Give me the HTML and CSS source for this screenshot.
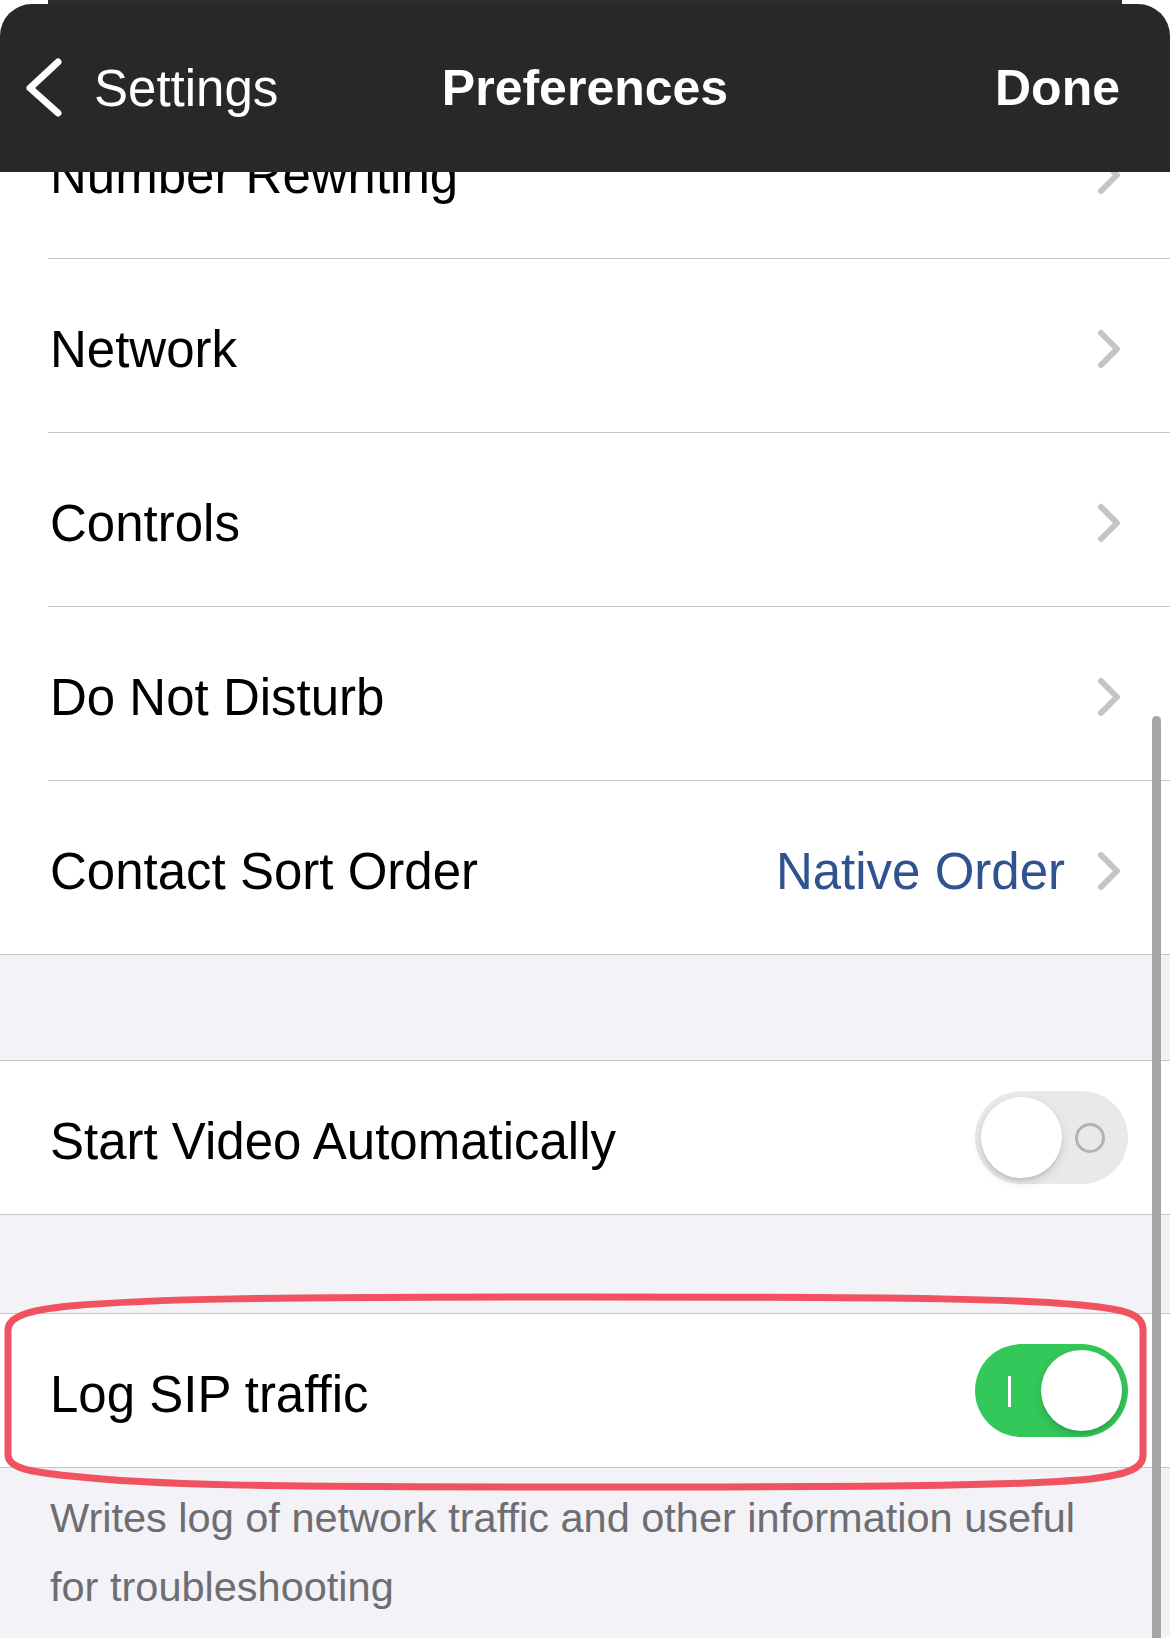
FILE: index.html
```html
<!DOCTYPE html>
<html lang="en">
<head>
<meta charset="utf-8">
<title>Preferences</title>
<link rel="stylesheet" href="styles.css">
</head>
<body>
<div class="screen">
  <div class="backcard"></div>
  <div class="sheet">
    <header class="nav">
      <div class="nav-left">
        <svg class="back-chev" width="40" height="60" viewBox="0 0 40 60"><path d="M33 4 L5 30 L33 55" fill="none" stroke="#fff" stroke-width="7" stroke-linecap="round" stroke-linejoin="round"/></svg>
        <span>Settings</span>
      </div>
      <div class="nav-title">Preferences</div>
      <div class="nav-right">Done</div>
    </header>

    <div class="content">
      <div class="group group-first">
        <div class="row">
          <span class="label">Number Rewriting</span>
          <svg class="chev" width="24" height="40" viewBox="0 0 24 40"><path d="M4 4 L20 20 L4 36" fill="none" stroke="#c4c4c7" stroke-width="6" stroke-linecap="round" stroke-linejoin="round"/></svg>
        </div>
        <div class="row">
          <span class="label">Network</span>
          <svg class="chev" width="24" height="40" viewBox="0 0 24 40"><path d="M4 4 L20 20 L4 36" fill="none" stroke="#c4c4c7" stroke-width="6" stroke-linecap="round" stroke-linejoin="round"/></svg>
        </div>
        <div class="row">
          <span class="label">Controls</span>
          <svg class="chev" width="24" height="40" viewBox="0 0 24 40"><path d="M4 4 L20 20 L4 36" fill="none" stroke="#c4c4c7" stroke-width="6" stroke-linecap="round" stroke-linejoin="round"/></svg>
        </div>
        <div class="row">
          <span class="label">Do Not Disturb</span>
          <svg class="chev" width="24" height="40" viewBox="0 0 24 40"><path d="M4 4 L20 20 L4 36" fill="none" stroke="#c4c4c7" stroke-width="6" stroke-linecap="round" stroke-linejoin="round"/></svg>
        </div>
        <div class="row row-last">
          <span class="label">Contact Sort Order</span>
          <span class="label value">Native Order</span>
          <svg class="chev" width="24" height="40" viewBox="0 0 24 40"><path d="M4 4 L20 20 L4 36" fill="none" stroke="#c4c4c7" stroke-width="6" stroke-linecap="round" stroke-linejoin="round"/></svg>
        </div>
      </div>

      <div class="group group-switch">
        <div class="row row-switch">
          <span class="label">Start Video Automatically</span>
          <div class="toggle toggle-off">
            <span class="toggle-o"></span>
            <span class="knob"></span>
          </div>
        </div>
      </div>

      <div class="group group-switch group-sip">
        <div class="row row-switch">
          <span class="label">Log SIP traffic</span>
          <div class="toggle toggle-on">
            <span class="toggle-i"></span>
            <span class="knob"></span>
          </div>
        </div>
      </div>

      <p class="footer">Writes log of network traffic and other information useful for troubleshooting</p>
    </div>
  </div>

  <div class="scrollbar"></div>

  <svg class="annotation" width="1170" height="1638" viewBox="0 0 1170 1638">
    <path d="M8 1330 C8 1316 30 1310 70 1306 C150 1299 250 1297 585 1297 C920 1297 1030 1299 1090 1306 C1130 1310 1143 1316 1143 1330 L1143 1455 C1143 1468 1130 1474 1090 1479 C1030 1485 920 1487 585 1487 C250 1487 150 1485 70 1476 C30 1472 8 1468 8 1455 Z" fill="none" stroke="#f0535f" stroke-width="7"/>
  </svg>
</div>
</body>
</html>
```

FILE: styles.css
```css
* { box-sizing: border-box; }

html, body {
  margin: 0;
  padding: 0;
  background: #ffffff;
}

.screen {
  position: relative;
  width: 1170px;
  height: 1638px;
  overflow: hidden;
  background: #ffffff;
  font-family: "Liberation Sans", Arial, sans-serif;
}

.backcard {
  position: absolute;
  top: 0;
  left: 48px;
  right: 48px;
  height: 30px;
  background: #2e2e2e;
}

.sheet {
  position: relative;
  margin-top: 4px;
  height: 1634px;
  border-radius: 32px 32px 0 0;
  overflow: hidden;
  background: #f2f2f7;
}

.nav {
  position: absolute;
  top: 0;
  left: 0;
  right: 0;
  height: 168px;
  z-index: 2;
  background: #282828;
  color: #ffffff;
  display: grid;
  grid-template-columns: 1fr auto 1fr;
  align-items: center;
  padding: 0 25px;
  font-size: 51px;
}

.nav-left {
  display: flex;
  align-items: center;
  gap: 29px;
}

.back-chev { display: block; }

.nav-title {
  font-weight: 700;
  font-size: 50px;
}

.nav-right {
  justify-self: end;
  padding-right: 25px;
  font-weight: 700;
  font-size: 50px;
}

.content {
  padding-top: 81px;
}

.group {
  background: #ffffff;
  border-bottom: 1px solid #c6c6c8;
}

.group-switch {
  border-top: 1px solid #c6c6c8;
  margin-top: 105px;
}

.group-sip {
  margin-top: 98px;
}

.row {
  display: flex;
  align-items: center;
  height: 174px;
  margin-left: 48px;
  padding: 0 49px 0 2px;
  border-bottom: 1px solid #c6c6c8;
}

.row-last {
  border-bottom: none;
  height: 173px;
}

.row-switch {
  height: 153px;
  border-bottom: none;
  padding-right: 42px;
}

.label {
  font-size: 51px;
  color: #000000;
  padding-top: 10px;
  line-height: 1.15;
  white-space: nowrap;
}

.value {
  margin-left: auto;
  margin-right: 32px;
  color: #30528f;
}

.chev {
  display: block;
  margin-left: auto;
  margin-top: 6px;
}

.value + .chev { margin-left: 0; }

.toggle {
  position: relative;
  margin-left: auto;
  width: 153px;
  height: 93px;
  border-radius: 47px;
  flex: none;
}

.toggle-off { background: #e9e9ea; }
.toggle-on { background: #34c759; }

.knob {
  position: absolute;
  top: 6px;
  left: 6px;
  width: 81px;
  height: 81px;
  border-radius: 50%;
  background: #ffffff;
  box-shadow: 0 4px 10px rgba(0, 0, 0, 0.14), 0 3px 1px rgba(0, 0, 0, 0.05);
}

.toggle-on .knob { left: 66px; }

.toggle-o {
  position: absolute;
  left: 100px;
  top: 32px;
  width: 30px;
  height: 30px;
  border: 3px solid #b3b3b3;
  border-radius: 50%;
}

.toggle-i {
  position: absolute;
  left: 33px;
  top: 32px;
  width: 3px;
  height: 31px;
  background: #ffffff;
}

.footer {
  margin: 0;
  padding: 15px 80px 0 50px;
  font-size: 41.5px;
  line-height: 69px;
  color: #6d6d72;
}

.scrollbar {
  position: absolute;
  left: 1152px;
  top: 716px;
  width: 9px;
  height: 960px;
  border-radius: 5px;
  background: #a6a6a6;
}

.annotation {
  position: absolute;
  top: 0;
  left: 0;
  pointer-events: none;
}
```
